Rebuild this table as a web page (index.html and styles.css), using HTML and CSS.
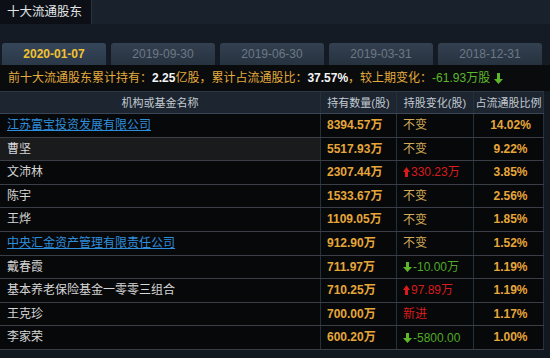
FILE: index.html
```html
<!DOCTYPE html>
<html lang="zh">
<head>
<meta charset="utf-8">
<title>十大流通股东</title>
<link rel="stylesheet" href="styles.css">
</head>
<body>
<div class="page">
  <div class="titlebar">
    <div class="title-tab">十大流通股东</div>
  </div>
  <div class="tabs">
    <div class="tab active">2020-01-07</div>
    <div class="tab">2019-09-30</div>
    <div class="tab">2019-06-30</div>
    <div class="tab">2019-03-31</div>
    <div class="tab">2018-12-31</div>
  </div>
  <div class="summary">
    <span class="gold">前十大流通股东累计持有：</span><b class="white">2.25</b><span class="gold">亿股，累计占流通股比：</span><b class="white">37.57%</b><span class="gold"> ，较上期变化：</span><span class="green">-61.93万股</span>
    <svg class="arrow" width="9" height="11" viewBox="0 0 9 11"><path d="M3 0h3v6h3l-4.5 5L0 6h3z" fill="#5cb82a"/></svg>
  </div>
  <div class="table">
    <div class="row head">
      <div class="cell c-name">机构或基金名称</div>
      <div class="cell c-center">持有数量(股)</div>
      <div class="cell c-center">持股变化(股)</div>
      <div class="cell c-center">占流通股比例</div>
    </div>
    <div class="row">
      <div class="cell name"><span class="link">江苏富宝投资发展有限公司</span></div>
      <div class="cell num">8394.57万</div>
      <div class="cell chg same">不变</div>
      <div class="cell pct">14.02%</div>
    </div>
    <div class="row hl">
      <div class="cell name">曹坚</div>
      <div class="cell num">5517.93万</div>
      <div class="cell chg same">不变</div>
      <div class="cell pct">9.22%</div>
    </div>
    <div class="row">
      <div class="cell name">文沛林</div>
      <div class="cell num">2307.44万</div>
      <div class="cell chg up"><svg class="ic" width="7" height="10" viewBox="0 0 7 10"><path d="M2 10h3V5h2L3.5 0 0 5h2z" fill="#d81c1c"/></svg>330.23万</div>
      <div class="cell pct">3.85%</div>
    </div>
    <div class="row">
      <div class="cell name">陈宇</div>
      <div class="cell num">1533.67万</div>
      <div class="cell chg same">不变</div>
      <div class="cell pct">2.56%</div>
    </div>
    <div class="row">
      <div class="cell name">王烨</div>
      <div class="cell num">1109.05万</div>
      <div class="cell chg same">不变</div>
      <div class="cell pct">1.85%</div>
    </div>
    <div class="row">
      <div class="cell name"><span class="link">中央汇金资产管理有限责任公司</span></div>
      <div class="cell num">912.90万</div>
      <div class="cell chg same">不变</div>
      <div class="cell pct">1.52%</div>
    </div>
    <div class="row">
      <div class="cell name">戴春霞</div>
      <div class="cell num">711.97万</div>
      <div class="cell chg down"><svg class="ic" width="9" height="10" viewBox="0 0 9 10"><path d="M3 0h3v5h3L4.5 10 0 5h3z" fill="#5cb82a"/></svg>-10.00万</div>
      <div class="cell pct">1.19%</div>
    </div>
    <div class="row">
      <div class="cell name">基本养老保险基金一零零三组合</div>
      <div class="cell num">710.25万</div>
      <div class="cell chg up"><svg class="ic" width="7" height="10" viewBox="0 0 7 10"><path d="M2 10h3V5h2L3.5 0 0 5h2z" fill="#d81c1c"/></svg>97.89万</div>
      <div class="cell pct">1.19%</div>
    </div>
    <div class="row">
      <div class="cell name">王克珍</div>
      <div class="cell num">700.00万</div>
      <div class="cell chg up">新进</div>
      <div class="cell pct">1.17%</div>
    </div>
    <div class="row">
      <div class="cell name">李家荣</div>
      <div class="cell num">600.20万</div>
      <div class="cell chg down"><svg class="ic" width="9" height="10" viewBox="0 0 9 10"><path d="M3 0h3v5h3L4.5 10 0 5h3z" fill="#5cb82a"/></svg>-5800.00</div>
      <div class="cell pct">1.00%</div>
    </div>
  </div>
</div>
</body>
</html>
```

FILE: styles.css
```css
* { box-sizing: border-box; }
html, body {
  margin: 0;
  padding: 0;
  background: #121922;
}
body {
  width: 550px;
  height: 358px;
  overflow: hidden;
  font-family: "Liberation Sans", "Noto Sans CJK SC", sans-serif;
  font-size: 12px;
}
.page {
  width: 550px;
  height: 358px;
  background: linear-gradient(#141b24, #111820);
}
.titlebar {
  height: 24px;
  background: #18212c;
  display: flex;
}
.title-tab {
  width: 92px;
  height: 24px;
  background: #0c1016;
  border-right: 1px solid #2a3440;
  color: #e2e4e6;
  font-size: 12.5px;
  line-height: 24px;
  padding-left: 7px;
}
.tabs {
  display: flex;
  gap: 5px;
  padding-left: 2px;
  margin-top: 19px;
  height: 22px;
}
.tab {
  width: 104px;
  height: 22px;
  border-radius: 3px 3px 0 0;
  background: linear-gradient(#334050, #27323f);
  color: #6c7886;
  text-align: center;
  line-height: 23px;
  font-size: 12px;
}
.tab.active {
  background: linear-gradient(#36465a, #2a3848);
  color: #f2c230;
  font-weight: bold;
}
.summary {
  height: 26px;
  background: #0a0b0d;
  padding-left: 8px;
  line-height: 26px;
  font-size: 12px;
  white-space: nowrap;
  display: flex;
  align-items: center;
}
.summary .gold { color: #e3ac3c; }
.summary .white { color: #f4f4f4; }
.summary .green { color: #5cb82a; }
.summary .arrow { margin-left: 4px; }
.table {
  width: 544px;
}
.row {
  display: grid;
  grid-template-columns: 321px 76px 77px 70px;
  height: 23.6px;
  background: #070809;
  border-bottom: 1px solid #3a3e46;
}
.row.head {
  height: 23px;
  background: #1c2530;
  border-top: 1px solid #2c3644;
  border-bottom: 1px solid #3a4656;
  color: #c2cad2;
  font-size: 11px;
}
.cell {
  line-height: 22px;
  border-right: 1px solid #26303c;
  white-space: nowrap;
  overflow: hidden;
}
.c-name, .c-center { text-align: center; }
.name {
  padding-left: 7px;
  color: #d6d6d6;
}
.row.hl .name { background: #1a1b1d; }
.link {
  color: #2f8edc;
  text-decoration: underline;
}
.num {
  color: #e6a63a;
  font-weight: bold;
  padding-left: 6px;
}
.chg {
  padding-left: 6px;
  display: flex;
  align-items: center;
}
.chg .ic { margin-right: 1px; }
.same { color: #d3aa5a; }
.up { color: #d81c1c; }
.down { color: #4eaa26; }
.pct {
  color: #e6a63a;
  font-weight: bold;
  text-align: center;
  padding-left: 4px;
}
```
